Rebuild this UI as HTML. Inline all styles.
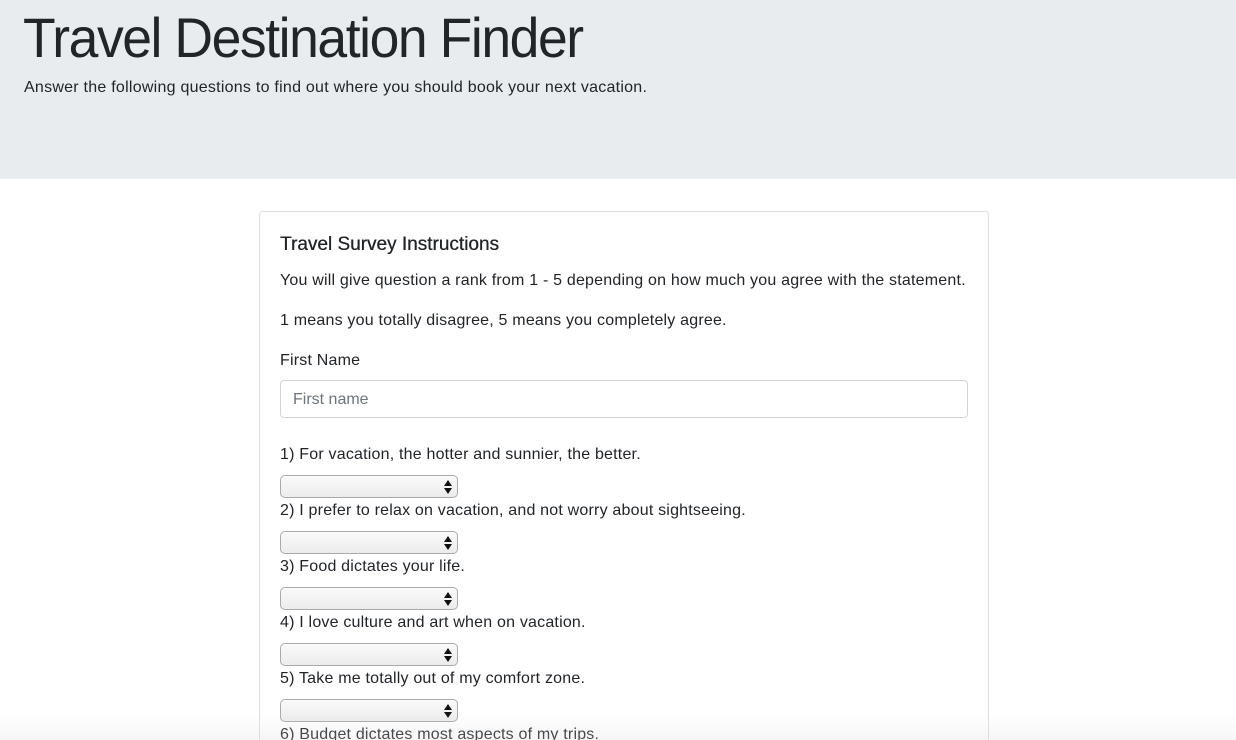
<!DOCTYPE html>
<html><head><meta charset="utf-8"><style>
*{box-sizing:border-box;margin:0;padding:0}
html,body{width:1236px;height:740px;overflow:hidden}
body{background:#fff;font-family:"Liberation Sans",sans-serif;color:#212529;position:relative}
.jumbo{height:179px;background:#e9ecef;position:relative}
.jumbo h1{position:absolute;left:23px;top:5px;font-size:56px;font-weight:normal;letter-spacing:-1.5px;white-space:nowrap;transform:scaleX(0.955);transform-origin:left}
.jumbo p{position:absolute;left:24px;top:79px;font-size:16px;letter-spacing:0.25px}
.card{position:absolute;left:259px;top:211px;width:730px;height:529px;border:1px solid #dfdfdf;border-bottom:0;border-radius:4px 4px 0 0}
.a{position:absolute;left:280px;font-size:16px;line-height:18px;white-space:nowrap;letter-spacing:0.2px}
.t{font-size:19px;line-height:22px;text-shadow:0.3px 0 0 #212529;letter-spacing:0}
.inp{position:absolute;left:280px;top:380px;width:688px;height:38px;border:1px solid #ced4da;border-radius:4px;color:#6c757d;font-size:16px;padding:10px 12px}
.sel{position:absolute;left:280px;width:178px;height:23px;border:1px solid #aaa;border-radius:5px;background:linear-gradient(#fafafa,#ececec)}
.sel:after{content:"";position:absolute;right:5px;top:4px;border:4px solid transparent;border-bottom:6px solid #111;border-top:0}
.sel:before{content:"";position:absolute;right:5px;top:12px;border:4px solid transparent;border-top:6px solid #111;border-bottom:0}
.fade{position:absolute;left:0;right:0;bottom:0;height:28px;background:linear-gradient(rgba(255,255,255,0),rgba(220,220,220,0.25))}
</style></head><body>
<div class="jumbo"><h1>Travel Destination Finder</h1><p>Answer the following questions to find out where you should book your next vacation.</p></div>
<div class="card"></div>
<div class="a t" style="top:234px">Travel Survey Instructions</div>
<div class="a" style="top:272px">You will give question a rank from 1 - 5 depending on how much you agree with the statement.</div>
<div class="a" style="top:312px">1 means you totally disagree, 5 means you completely agree.</div>
<div class="a" style="top:352px">First Name</div>
<div class="inp">First name</div>
<div class="a" style="top:446px">1) For vacation, the hotter and sunnier, the better.</div>
<div class="sel" style="top:475px"></div>
<div class="a" style="top:502px">2) I prefer to relax on vacation, and not worry about sightseeing.</div>
<div class="sel" style="top:531px"></div>
<div class="a" style="top:558px">3) Food dictates your life.</div>
<div class="sel" style="top:587px"></div>
<div class="a" style="top:614px">4) I love culture and art when on vacation.</div>
<div class="sel" style="top:643px"></div>
<div class="a" style="top:670px">5) Take me totally out of my comfort zone.</div>
<div class="sel" style="top:699px"></div>
<div class="a" style="top:726px;height:14px;overflow:hidden">6) Budget dictates most aspects of my trips.</div>
<div class="fade"></div>
</body></html>
